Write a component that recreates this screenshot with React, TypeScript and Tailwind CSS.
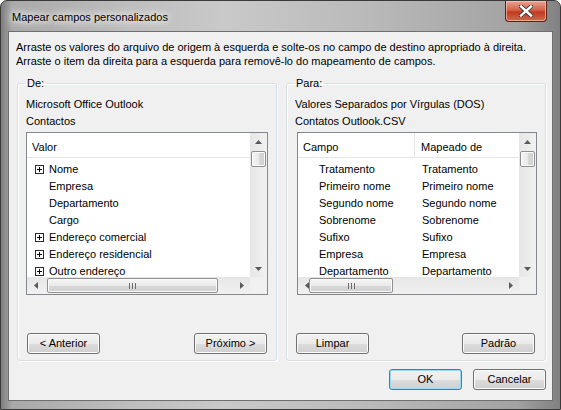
import React from 'react';

const FONT = "font-['Liberation_Sans',Arial,sans-serif]";

const LEFT_ROWS = [
  { label: 'Nome', plus: true },
  { label: 'Empresa' },
  { label: 'Departamento' },
  { label: 'Cargo' },
  { label: 'Endereço comercial', plus: true },
  { label: 'Endereço residencial', plus: true },
  { label: 'Outro endereço', plus: true },
];

const RIGHT_ROWS = ['Tratamento', 'Primeiro nome', 'Segundo nome', 'Sobrenome', 'Sufixo', 'Empresa', 'Departamento'];

const Arrow = ({ dir }: { dir: 'up' | 'down' | 'left' | 'right' }) => {
  const pts = {
    up: '0,4 3.5,0 7,4',
    down: '0,0 7,0 3.5,4',
    left: '4,0 4,7 0,3.5',
    right: '0,0 0,7 4,3.5',
  }[dir];
  const vertical = dir === 'up' || dir === 'down';
  return (
    <svg width={vertical ? 7 : 4} height={vertical ? 4 : 7} viewBox={vertical ? '0 0 7 4' : '0 0 4 7'}>
      <polygon points={pts} fill="#5a5a5a" />
    </svg>
  );
};

const VScroll = () => (
  <div className="w-[17px] flex flex-col items-center bg-[linear-gradient(90deg,#e6e6e6,#f1f1f1)]">
    <div className="h-[17px] w-full flex items-center justify-center">
      <Arrow dir="up" />
    </div>
    <div className="mt-[1px] h-[16px] w-[15px] rounded-[2px] border border-[#8f8f8f] bg-[linear-gradient(90deg,#f6f6f6,#e9e9e9_50%,#d9d9d9_51%,#cfcfcf)] shadow-[inset_0_0_0_1px_#fbfbfb]" />
    <div className="flex-1" />
    <div className="h-[17px] w-full flex items-center justify-center">
      <Arrow dir="down" />
    </div>
  </div>
);

const HScroll = ({ thumbLeft, thumbWidth }: { thumbLeft: number; thumbWidth: number }) => (
  <div className="flex-1 flex items-center bg-[linear-gradient(#e6e6e6,#f1f1f1)]">
    <div className="w-[17px] h-full flex items-center justify-center">
      <Arrow dir="left" />
    </div>
    <div
      className="h-[15px] rounded-[2px] border border-[#8f8f8f] bg-[linear-gradient(#f6f6f6,#e9e9e9_50%,#d9d9d9_51%,#cfcfcf)] shadow-[inset_0_0_0_1px_#fbfbfb] flex items-center justify-center gap-[2px]"
      style={{ marginLeft: thumbLeft, width: thumbWidth }}
    >
      <div className="w-[1px] h-[6px] bg-[#6d6d6d]" />
      <div className="w-[1px] h-[6px] bg-[#6d6d6d]" />
      <div className="w-[1px] h-[6px] bg-[#6d6d6d]" />
    </div>
    <div className="flex-1" />
    <div className="w-[17px] h-full flex items-center justify-center">
      <Arrow dir="right" />
    </div>
  </div>
);

const ListBox = ({
  width,
  header,
  children,
  thumbLeft,
  thumbWidth,
}: {
  width: string;
  header: React.ReactNode;
  children: React.ReactNode;
  thumbLeft: number;
  thumbWidth: number;
}) => (
  <div className={`${width} h-[163px] border border-[#828790] bg-white flex flex-col`}>
    <div className="flex flex-1 min-h-0">
      <div className="flex-1 min-w-0 flex flex-col overflow-hidden">
        <div className="h-[25px] shrink-0 border-b border-[#e5e5e5] flex items-stretch">{header}</div>
        <div className="pt-[3px]">{children}</div>
      </div>
      <VScroll />
    </div>
    <div className="h-[17px] flex">
      <HScroll thumbLeft={thumbLeft} thumbWidth={thumbWidth} />
      <div className="w-[17px] bg-[#f0f0f0]" />
    </div>
  </div>
);

const Button = ({ children, primary }: { children: React.ReactNode; primary?: boolean }) => (
  <button
    className={`w-[73px] h-[21px] rounded-[3px] border text-[11px] leading-none text-black bg-[linear-gradient(#f2f2f2,#ebebeb_50%,#dddddd_51%,#cfcfcf)] ${
      primary ? 'border-[#3c7fb1] shadow-[inset_0_0_0_1px_#97dcf7]' : 'border-[#707070] shadow-[inset_0_0_0_1px_#fbfbfb]'
    }`}
  >
    {children}
  </button>
);

const GroupBox = ({ title, children }: { title: string; children: React.ReactNode }) => (
  <fieldset className="w-[260px] h-[285px] border border-[#d5dfe5] rounded-[3px] shadow-[inset_1px_1px_0_#fff,1px_1px_0_#fff] flex flex-col">
    <legend className="ml-[7px] px-[2px] leading-[15px]">{title}</legend>
    {children}
  </fieldset>
);

const PlusBox = () => (
  <div className="w-[9px] h-[9px] border border-[#2b2b2b] bg-white flex items-center justify-center relative">
    <div className="absolute w-[5px] h-[1px] bg-[#000]" />
    <div className="absolute w-[1px] h-[5px] bg-[#000]" />
  </div>
);

export default function App() {
  return (
    <div
      className={`${FONT} text-[11px] leading-[15px] text-black w-[561px] h-[410px] flex flex-col rounded-t-[7px] border border-[#3a3a3a] px-[7px] pb-[8px] bg-[linear-gradient(90deg,#7e7e7e_0%,#a9a9a9_2%,#bdbdbd_22%,#c9c9c9_40%,#bababa_65%,#a3a3a3_92%,#808080_100%)]`}
    >
      <div className="h-[30px] shrink-0 flex items-start justify-between">
        <div className="ml-[4px] mt-[9px] [text-shadow:0_0_6px_#fff,0_0_10px_#fff,0_0_14px_#fff]">
          Mapear campos personalizados
        </div>
        <div className="mr-[6px] w-[42px] h-[21px] rounded-b-[4px] border border-[#5a2218] border-t-0 bg-[linear-gradient(#e8a493,#d4634b_45%,#c23a20_55%,#d0694d)] shadow-[inset_0_0_0_1px_rgba(255,210,200,0.6)] flex items-center justify-center">
          <svg width="14" height="12" viewBox="0 0 14 12">
            <path d="M2 1.5 L12 10.5 M12 1.5 L2 10.5" stroke="#3a3a3a" strokeWidth="4.2" strokeLinecap="square" />
            <path d="M2 1.5 L12 10.5 M12 1.5 L2 10.5" stroke="#ffffff" strokeWidth="2.4" strokeLinecap="square" />
          </svg>
        </div>
      </div>

      <div className="flex-1 border border-[#6f6f6f] bg-[#f0f0f0] flex flex-col pl-[7px] pr-[5px]">
        <div className="mt-[8px] leading-[14px] whitespace-nowrap">
          <div>Arraste os valores do arquivo de origem à esquerda e solte-os no campo de destino apropriado à direita.</div>
          <div>Arraste o item da direita para a esquerda para removê-lo do mapeamento de campos.</div>
        </div>

        <div className="mt-[8px] ml-[1px] flex gap-[9px]">
          <GroupBox title="De:">
            <div className="ml-[8px] mt-[6px]">Microsoft Office Outlook</div>
            <div className="ml-[8px] mt-[2px]">Contactos</div>
            <div className="ml-[8px] mt-[3px]">
              <ListBox
                width="w-[242px]"
                thumbLeft={3}
                thumbWidth={171}
                header={<div className="pl-[5px] pt-[4px] flex items-center">Valor</div>}
              >
                {LEFT_ROWS.map((r) => (
                  <div key={r.label} className="h-[17px] flex items-center">
                    <div className="w-[22px] pl-[8px] shrink-0">{r.plus && <PlusBox />}</div>
                    <span className="whitespace-nowrap">{r.label}</span>
                  </div>
                ))}
              </ListBox>
            </div>
            <div className="flex-1" />
            <div className="flex justify-between ml-[9px] mr-[9px] mb-[6px]">
              <Button>&lt; Anterior</Button>
              <Button>Próximo &gt;</Button>
            </div>
          </GroupBox>

          <GroupBox title="Para:">
            <div className="ml-[8px] mt-[6px]">Valores Separados por Vírgulas (DOS)</div>
            <div className="ml-[8px] mt-[2px]">Contatos Outlook.CSV</div>
            <div className="ml-[10px] mt-[3px]">
              <ListBox
                width="w-[240px]"
                thumbLeft={-6}
                thumbWidth={84}
                header={
                  <div className="flex w-full">
                    <div className="w-[117px] flex items-center pl-[5px] pt-[4px] border-r border-[#e5e5e5]">Campo</div>
                    <div className="pl-[6px] pt-[4px] flex items-center">Mapeado de</div>
                  </div>
                }
              >
                {RIGHT_ROWS.map((r) => (
                  <div key={r} className="h-[17px] flex items-center">
                    <div className="w-[124px] pl-[21px] shrink-0 whitespace-nowrap">{r}</div>
                    <div className="whitespace-nowrap">{r}</div>
                  </div>
                ))}
              </ListBox>
            </div>
            <div className="flex-1" />
            <div className="flex justify-between ml-[9px] mr-[10px] mb-[6px]">
              <Button>Limpar</Button>
              <Button>Padrão</Button>
            </div>
          </GroupBox>
        </div>

        <div className="mt-[8px] flex justify-end gap-[11px] mr-[1px]">
          <Button primary>OK</Button>
          <Button>Cancelar</Button>
        </div>
      </div>
    </div>
  );
}
